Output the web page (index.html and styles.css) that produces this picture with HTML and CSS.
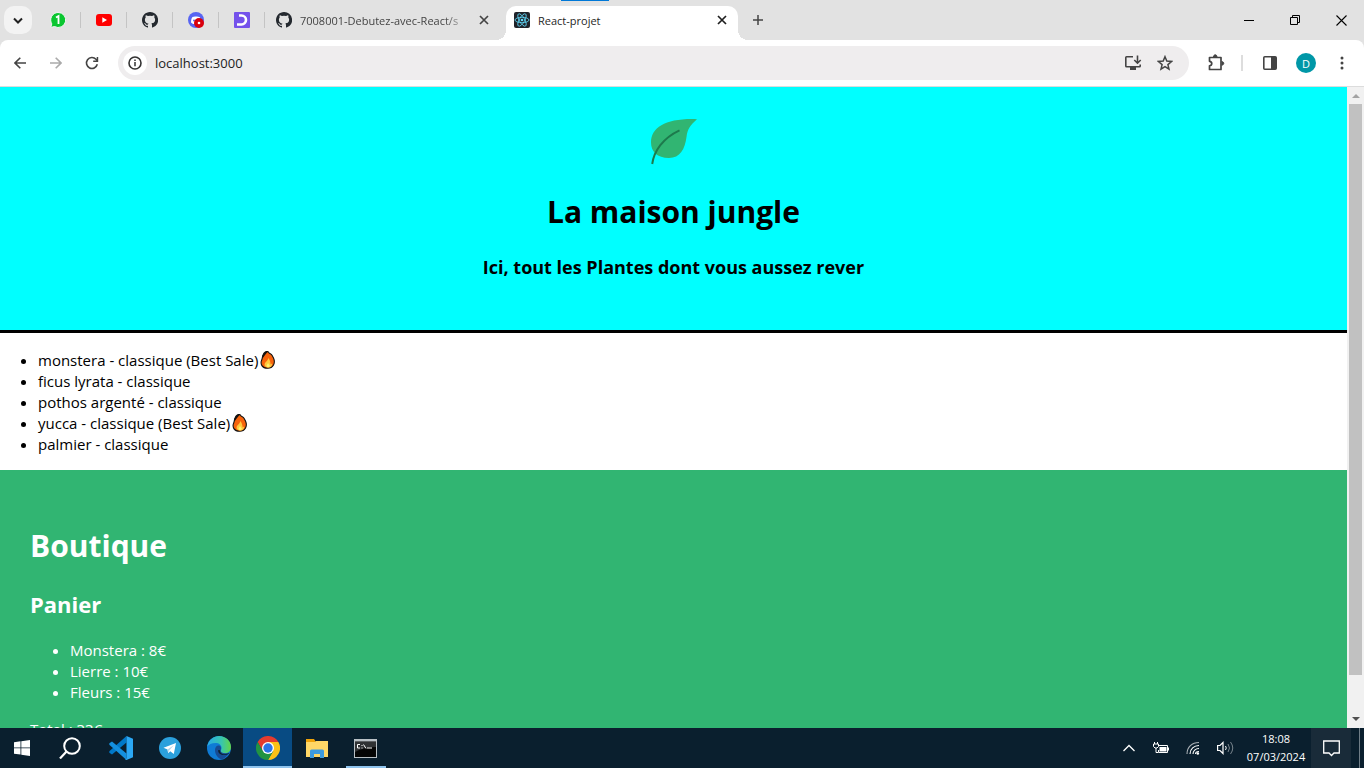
FILE: index.html
```html
<!DOCTYPE html>
<html lang="fr">
<head>
<meta charset="utf-8">
<title>React-projet</title>
<link rel="stylesheet" href="styles.css">
</head>
<body>
<svg class="defs" aria-hidden="true">
  <symbol id="github" viewBox="0 0 16 16"><path d="M8 0C3.6 0 0 3.6 0 8c0 3.500 2.300 6.500 5.500 7.600.4.1.5-.2.5-.4v-1.400c-2.200.5-2.700-1-2.700-1-.4-.9-.9-1.200-.9-1.200-.7-.5.1-.5.1-.5.8.1 1.200.8 1.200.8.7 1.300 1.900.9 2.300.7.1-.5.300-.9.500-1.100-1.800-.2-3.600-.9-3.600-4 0-.9.300-1.600.8-2.100-.1-.2-.4-1 .1-2.100 0 0 .7-.2 2.200.8a7.500 7.500 0 0 1 4 0c1.500-1 2.200-.8 2.200-.8.4 1.100.2 1.900.1 2.100.5.600.8 1.300.8 2.100 0 3.100-1.900 3.700-3.700 3.900.3.400.6.900.6 1.700v2.100c0 .2.100.5.600.4A8 8 0 0 0 8 0z" fill="#24292f"/></symbol>
  <symbol id="close" viewBox="0 0 10 10"><path d="M1 1l8 8M9 1L1 9" stroke="currentColor" stroke-width="1.700"/></symbol>
  <symbol id="fire" viewBox="0 0 16 18"><path d="M3 4C4 1 7-.5 8.500 1.200 9.500 3 11 2.500 12 4.200L13.500 7c2.200 5-.2 10.300-5.900 10.300S0 13 1.700 9C2.600 7 2.200 6 3 4z" fill="#f7630c" stroke="#111" stroke-width="1.100"/><path d="M2.500 4.500L5 1l3-.5L5 4 2.500 7.500z" fill="#111"/><path d="M8 7c.4 3-2.800 3.500-3.400 6-.4 2 1.200 3.500 3.600 3.500s4.300-1.500 3.700-4l-1.300 1C10.500 11 10 8.500 8 7z" fill="#ffc83d"/><path d="M8 12l-1.600 3L8 16.500l2-1.500z" fill="#fff36b"/></symbol>
</svg>

<header class="browser">
  <div class="tabstrip">
    <span class="capture-bar"></span>
    <button class="tab-search" aria-label="Rechercher des onglets"><svg width="10" height="7" viewBox="0 0 10 7"><path d="M1 1.500l4 4 4-4" fill="none" stroke="#222" stroke-width="2"/></svg></button>
    <button class="pinned" aria-label="WhatsApp"><svg width="16" height="16" viewBox="0 0 16 16"><path d="M8 .5a7.500 7.500 0 1 1-3.500 14L.8 15.400l1-3.500A7.500 7.500 0 0 1 8 .5z" fill="#0ac630" stroke="#f5f5f5"/><path d="M6 5.500L8.500 4v8" fill="none" stroke="#fff" stroke-width="1.800"/></svg></button>
    <button class="pinned" aria-label="YouTube"><svg width="16" height="16" viewBox="0 0 16 16"><rect y="2" width="16" height="12" rx="3" fill="#f00"/><path d="M6.300 5.300v5.400L11 8z" fill="#fff"/></svg></button>
    <button class="pinned" aria-label="GitHub"><svg width="16" height="16"><use href="#github"/></svg></button>
    <button class="pinned" aria-label="Discord"><svg width="16" height="16" viewBox="0 0 16 16"><circle cx="8" cy="8" r="8" fill="#5865f2"/><path d="M3 10.500c0-3 .8-5 1.500-5.500L7 4.500h2l2.500.5c1 1 1.500 3 1.500 5.500L11 12H5z" fill="#fff"/><circle cx="6" cy="8.500" r="1" fill="#5865f2"/><circle cx="11" cy="11" r="5" fill="#d9000d"/><circle cx="11" cy="11" r="1.300" fill="#fff"/></svg></button>
    <button class="pinned" aria-label="Dashboard"><svg width="16" height="16" viewBox="0 0 16 16"><rect width="16" height="16" rx="1" fill="#7451eb"/><path d="M5 3.500h2.500a4.500 4.500 0 0 1 0 9H3" fill="none" stroke="#fff" stroke-width="2.600"/></svg></button>
    <div class="tab">
      <svg width="16" height="16"><use href="#github"/></svg>
      <span class="tab-title faded">7008001-Debutez-avec-React/s</span>
      <button class="tab-close" aria-label="Fermer"><svg width="10" height="10"><use href="#close"/></svg></button>
    </div>
    <div class="tab active">
      <svg width="16" height="16" viewBox="0 0 16 16"><rect width="16" height="16" rx="2" fill="#20232a"/><g fill="none" stroke="#61dafb" stroke-width=".8"><ellipse cx="8" cy="8" rx="7" ry="2.700"/><ellipse cx="8" cy="8" rx="7" ry="2.700" transform="rotate(60 8 8)"/><ellipse cx="8" cy="8" rx="7" ry="2.700" transform="rotate(120 8 8)"/></g><circle cx="8" cy="8" r="1.300" fill="#61dafb"/></svg>
      <span class="tab-title">React-projet</span>
      <button class="tab-close" aria-label="Fermer"><svg width="10" height="10"><use href="#close"/></svg></button>
    </div>
    <button class="new-tab" aria-label="Nouvel onglet"><svg width="10" height="10" viewBox="0 0 10 10"><path d="M5 0v10M0 5h10" stroke="#444" stroke-width="1.500"/></svg></button>
    <div class="window-controls">
      <button aria-label="Réduire"><svg width="10" height="10" viewBox="0 0 10 10"><path d="M0 5.500h10" stroke="#000"/></svg></button>
      <button aria-label="Restaurer"><svg width="10" height="10" viewBox="0 0 10 10"><path d="M.5 2.500h7v7h-7zM2.500 2.500v-2h7v7h-2" fill="none" stroke="#000"/></svg></button>
      <button aria-label="Fermer la fenêtre"><svg width="11" height="11" viewBox="0 0 11 11"><path d="M.5.5l10 10M10.500.5l-10 10" stroke="#000" stroke-width="1.100"/></svg></button>
    </div>
  </div>
  <div class="toolbar">
    <button class="nav" aria-label="Retour"><svg width="12" height="12" viewBox="0 0 12 12"><path d="M12 6H1M6.300.7L1 6l5.300 5.300" fill="none" stroke="#444" stroke-width="1.600"/></svg></button>
    <button class="nav" aria-label="Suivant"><svg width="12" height="12" viewBox="0 0 12 12"><path d="M0 6h11M5.700.7L11 6l-5.300 5.300" fill="none" stroke="#aaa" stroke-width="1.600"/></svg></button>
    <button class="nav" aria-label="Actualiser"><svg width="14" height="14" viewBox="0 0 14 14"><path d="M12.300 8.300A5.500 5.500 0 1 1 11 3.200l1.300 1.400" fill="none" stroke="#444" stroke-width="1.600"/><path d="M13.200 1v5H8.200V4.500h3.500V1z" fill="#444"/></svg></button>
    <div class="omnibox">
      <button class="site-info" aria-label="Informations sur le site"><svg width="14" height="14" viewBox="0 0 14 14"><circle cx="7" cy="7" r="6" fill="none" stroke="#333" stroke-width="1.600"/><path d="M7 6v4.300M7 3.400v1.500" stroke="#333" stroke-width="1.500"/></svg></button>
      <input class="address" type="text" value="localhost:3000" aria-label="Adresse">
      <button class="tool" aria-label="Installer"><svg width="18" height="16" viewBox="0 0 18 16"><path d="M9 1.800H2.500q-.7 0-.7.700v8.500q0 .7.700.7h13q.7 0 .7-.7V9.500" fill="none" stroke="#444" stroke-width="1.600"/><path d="M6 12h6v3H6z" fill="#444"/><path d="M13.500.5V8M10.300 5l3.200 3.200L16.700 5" fill="none" stroke="#444" stroke-width="1.600"/></svg></button>
      <button class="tool" aria-label="Ajouter aux favoris"><svg width="16" height="16" viewBox="0 0 16 16"><path d="M8 1.700l1.800 4.400 4.700.4-3.600 3.100 1.100 4.600L8 11.700l-4 2.500 1.100-4.600-3.600-3.100 4.700-.4z" fill="none" stroke="#444" stroke-width="1.500"/></svg></button>
    </div>
    <button class="extensions" aria-label="Extensions"><svg width="18" height="18" viewBox="0 0 18 18"><path d="M2.500 3.500H14v12H2.500v-3.700c3-.2 3-4.300 0-4.500z" fill="none" stroke="#444" stroke-width="1.700" stroke-linejoin="round"/><path d="M6.500 3c0-3 3.500-3 3.500 0M14.500 7.500c3 0 3 3.700 0 3.700" fill="#444" stroke="#444"/></svg></button>
    <span class="toolbar-rule"></span>
    <button class="side-panel" aria-label="Panneau latéral"><svg width="14" height="14" viewBox="0 0 14 14"><rect x=".8" y=".8" width="12.400" height="12.400" rx="1" fill="none" stroke="#444" stroke-width="1.600"/><path d="M8 1h5v12H8z" fill="#444"/></svg></button>
    <button class="profile" aria-label="Profil">D</button>
    <button class="more" aria-label="Menu"><svg width="4" height="14" viewBox="0 0 4 14"><g fill="#444"><circle cx="2" cy="2" r="1.500"/><circle cx="2" cy="7" r="1.500"/><circle cx="2" cy="12" r="1.500"/></g></svg></button>
  </div>
</header>

<div class="viewport">
  <main class="page">
    <section class="banner">
      <svg class="logo" width="46" height="46" viewBox="0 0 46 46" role="img" aria-label="La maison jungle"><path d="M46 .2C39 6.500 36.500 10 35.500 18 34 30 29 39 18 39 6 39 0 32.500 0 23.500 0 8 16-1 46 .2z" fill="#31b572"/><path d="M1.200 45C3 32 12 19 28.500 11.300" fill="none" stroke="#1d7a4c" stroke-width="2"/></svg>
      <h1>La maison jungle</h1>
      <h3>Ici, tout les Plantes dont vous aussez rever</h3>
    </section>
    <ul class="plants">
      <li>monstera - classique (Best Sale)<svg class="fire" width="16" height="18" role="img" aria-label="🔥"><use href="#fire"/></svg></li>
      <li>ficus lyrata - classique</li>
      <li>pothos argenté - classique</li>
      <li>yucca - classique (Best Sale)<svg class="fire" width="16" height="18" role="img" aria-label="🔥"><use href="#fire"/></svg></li>
      <li>palmier - classique</li>
    </ul>
    <section class="cart">
      <h1>Boutique</h1>
      <h2>Panier</h2>
      <ul>
        <li>Monstera : 8€</li>
        <li>Lierre : 10€</li>
        <li>Fleurs : 15€</li>
      </ul>
      <p>Total : 33€</p>
    </section>
  </main>
  <div class="scrollbar" aria-hidden="true">
    <svg width="17" height="17" viewBox="0 0 17 17"><path d="M5 11h8L9 7z" fill="#a3a3a3"/></svg>
    <div class="track"><div class="thumb"></div></div>
    <svg width="17" height="17" viewBox="0 0 17 17"><path d="M5 6h8l-4 4z" fill="#505050"/></svg>
  </div>
</div>

<footer class="taskbar">
  <button class="start" aria-label="Démarrer"><svg width="16" height="16" viewBox="0 0 16 16"><path d="M0 2.200l6.500-.9v6.200H0zM7.300 1.200L16 0v7.500H7.300zM0 8.300h6.500v6.300L0 13.700zM7.300 8.300H16V16l-8.700-1.200z" fill="#fff"/></svg></button>
  <button class="search" aria-label="Rechercher"><svg width="22" height="22" viewBox="0 0 22 22"><circle cx="13" cy="9" r="7.800" fill="none" stroke="#fff" stroke-width="2"/><path d="M7.500 14.500L1 21.500" stroke="#fff" stroke-width="2.200"/></svg></button>
  <button class="app" aria-label="Visual Studio Code"><svg width="24" height="24" viewBox="0 0 24 24"><path d="M17.500 6.500L3 18.500.3 16.800v-1.500L17.500 0z" fill="#0078c8"/><path d="M.3 7.200L3 5.500l14.500 12V24L.3 8.700z" fill="#1490df"/><path d="M17.500 0L24 2.800v18.400L17.500 24l-1.500-.8 1.500-.7z" fill="#2ba8f5"/></svg></button>
  <button class="app" aria-label="Telegram"><svg width="22" height="22" viewBox="0 0 22 22"><circle cx="11" cy="11" r="11" fill="#2ba0dc"/><path d="M4.500 10.800L17 6l-2.200 11-3.600-2.700-2 1.900-.7-3.700z" fill="#fff"/><path d="M8.500 12.500L15 8l-5.200 6-.6 2.200z" fill="#b9d9ec"/></svg></button>
  <button class="app" aria-label="Edge"><svg width="24" height="24" viewBox="0 0 24 24"><defs><linearGradient id="edge-a" x1="0" x2="1"><stop offset="0" stop-color="#28a9e8"/><stop offset=".6" stop-color="#38c5ae"/><stop offset="1" stop-color="#62d548"/></linearGradient></defs><circle cx="12" cy="12" r="12" fill="#0f7bd5"/><path d="M.2 10.500C1.500 3.500 7 0 12 0c7 0 12 5 12 11 0 4-3 6.500-6.500 6.500-3 0-4.500-1.200-4-2.500 2.500-3 .5-7.500-4-8C5 6.800 1.500 8.500.2 10.500z" fill="url(#edge-a)"/><path d="M8 14c0-3 2-5 4-4.500 2.500.7 2.300 3.500 1.500 5 0 2 3.500 3.500 8.500 2.300-2 3.700-4.500 5.700-7 6.700-4-1-7-5-7-9.500z" fill="#174c94"/><path d="M13.200 14.200c-.5 2 1.200 4 4.300 4 2.300 0 4-.7 5-1.700l-.8 1.500c-5 2.500-11 .5-10.500-4z" fill="#0b2131"/></svg></button>
  <button class="app current" aria-label="Chrome"><svg width="24" height="24" viewBox="0 0 24 24"><path d="M1.600 6A12 12 0 0 1 22.400 6H12L6.800 15z" fill="#e33b2e"/><path d="M22.400 6A12 12 0 0 1 12 24l5.200-9L12 6z" fill="#fbc116"/><path d="M12 24A12 12 0 0 1 1.600 6l5.200 9h10.400z" fill="#229342"/><circle cx="12" cy="12" r="6" fill="#fff"/><circle cx="12" cy="12" r="4.700" fill="#2a74e8"/></svg></button>
  <button class="app" aria-label="Explorateur de fichiers"><svg width="22" height="19" viewBox="0 0 22 19"><path d="M0 0h8l2 3h12v15H0z" fill="#f0a30a"/><path d="M0 3h9l1-1h12v16H0z" fill="#ffd767"/><path d="M4 19v-7q0-1.500 1.500-1.500h11q1.500 0 1.500 1.500v7h-4v-4H8v4z" fill="#3d9ade"/></svg></button>
  <button class="app open" aria-label="Invite de commandes"><svg width="23" height="19" viewBox="0 0 23 19"><path d="M0 0h23v19H0z" fill="#b9c0c5"/><path d="M1 2.500h21V18H1z" fill="#050505"/><path d="M1 3h21v5Q10 8 1 13z" fill="#303234"/><path d="M6 5.500H3.500v3.500H6M8 6v1M8 8.500v1M9.500 5.500l2.500 4M13 9h5" fill="none" stroke="#fff"/></svg></button>
  <div class="tray">
    <button class="tray-chevron" aria-label="Icônes cachées"><svg width="12" height="8" viewBox="0 0 12 8"><path d="M.5 7L6 1.500 11.500 7" fill="none" stroke="#fff" stroke-width="1.300"/></svg></button>
    <button aria-label="Batterie"><svg width="17" height="13" viewBox="0 0 17 13"><path d="M6 3.500h8.500v7h-9V8M15.500 5.500v3" fill="none" stroke="#fff"/><path d="M6.500 5h7v4.500h-7z" fill="#fff"/><path d="M1.500 0v2M4.500 0v2M3 6v4.500h2" fill="none" stroke="#fff"/><path d="M.5 2h5v2.500L4 6H2L.5 4.500z" fill="none" stroke="#fff"/></svg></button>
    <button aria-label="Wi-Fi"><svg width="14" height="14" viewBox="0 0 14 14"><g fill="none" stroke="#fff" stroke-width="1.100"><path d="M1 13C1 6 6 1.500 13 1.500" opacity=".65"/><path d="M4 13c0-5 4-8.500 9-8.500M7 13c0-3 2.500-5.500 6-5.500"/><path d="M9.500 13c0-1.500 1.500-2.500 3.500-2.500"/></g><circle cx="11.800" cy="12.500" r="1.300" fill="#fff"/></svg></button>
    <button aria-label="Volume"><svg width="17" height="14" viewBox="0 0 17 14"><path d="M.6 4.500H3l3-3v11l-3-3H.6z" fill="none" stroke="#fff" stroke-width="1.200"/><g fill="none" stroke="#fff"><path d="M8.500 5q1.500 2 0 4"/><path d="M11 3q3 4 0 8M13.500 1q4.500 6 0 12" opacity=".45"/></g></svg></button>
    <button class="clock"><time>18:08</time><span>07/03/2024</span></button>
    <button class="notifications" aria-label="Notifications"><svg width="17" height="17" viewBox="0 0 17 17"><path d="M.7 1h15.600v12H11l-2.500 2.500L6 13H.7z" fill="none" stroke="#fff" stroke-width="1.300"/></svg></button>
    <span class="show-desktop"></span>
  </div>
</footer>
</body>
</html>
```

FILE: styles.css
```css
* { box-sizing: border-box; }

body {
  margin: 0;
  height: 100vh;
  display: flex;
  flex-direction: column;
  overflow: hidden;
  font-family: "Open Sans", "Noto Sans", sans-serif;
  font-size: 15px;
  color: #000;
  background: #fff;
}

svg { display: block; flex: none; }
.defs { position: absolute; width: 0; height: 0; }

button {
  display: flex;
  align-items: center;
  justify-content: center;
  flex: none;
  margin: 0;
  padding: 0;
  border: 0;
  background: none;
  color: inherit;
  font: inherit;
}

/* Browser chrome */
.browser { flex: none; background: #e2e2e2; }

.tabstrip {
  position: relative;
  display: flex;
  height: 40px;
  padding-left: 4px;
}

.capture-bar {
  position: absolute;
  top: 0;
  left: 561px;
  width: 48px;
  height: 1px;
  background: #0078d7;
}

.tab-search {
  width: 28px;
  height: 28px;
  margin: 6px 3px 0 0;
  border-radius: 10px;
  background: #f3f3f3;
}

.pinned {
  width: 46px;
  height: 40px;
  background: linear-gradient(#c4c4c4, #c4c4c4) right center / 1px 16px no-repeat;
}

.tab {
  display: flex;
  align-items: center;
  gap: 8px;
  width: 241px;
  padding: 0 16px 0 11px;
  font-size: 11px;
  color: #444;
}

.tab-title { flex: 1; overflow: hidden; white-space: nowrap; }
.faded { mask-image: linear-gradient(90deg, #000 85%, transparent); }
.tab-close { width: 12px; height: 16px; color: #444; }

.tab.active {
  position: relative;
  width: 232px;
  height: 34px;
  margin-top: 6px;
  padding: 0 10px 6px 8px;
  border-radius: 10px 10px 0 0;
  background: #fff;
  color: #1f1f1f;
}

.tab.active .tab-close { color: #1f1f1f; }

.tab.active::before,
.tab.active::after {
  content: "";
  position: absolute;
  bottom: 0;
  width: 10px;
  height: 10px;
}
.tab.active::before { right: 100%; background: radial-gradient(circle at 0 0, transparent 10px, #fff 10px); }
.tab.active::after { left: 100%; background: radial-gradient(circle at 100% 0, transparent 10px, #fff 10px); }

.new-tab { width: 40px; }
.window-controls { display: flex; margin-left: auto; }
.window-controls button { width: 46px; }

.toolbar {
  display: flex;
  align-items: center;
  height: 47px;
  padding: 0 16px 0 2px;
  border-bottom: 1px solid #dcdcdc;
  border-radius: 8px 8px 0 0;
  background: #fff;
}

.nav { width: 36px; height: 34px; }

.omnibox {
  display: flex;
  flex: 1;
  align-items: center;
  height: 34px;
  margin-left: 8px;
  padding: 0 8px 0 5px;
  border-radius: 17px;
  background: #efedee;
}

.site-info { width: 24px; height: 24px; border-radius: 50%; background: #fff; }

.address {
  flex: 1;
  min-width: 0;
  height: 24px;
  margin: 0;
  padding: 0 8px;
  border: 0;
  background: none;
  font-family: inherit;
  font-size: 13px;
  color: #222;
}

.tool { width: 32px; height: 32px; }
.extensions { width: 32px; margin-left: 11px; }
.toolbar-rule { width: 2px; height: 16px; margin: 0 20px 0 9px; background: #ddd; }
.side-panel { width: 14px; }

.profile {
  width: 20px;
  height: 20px;
  margin: 0 20px 0 19px;
  border-radius: 50%;
  background: #0097a7;
  color: #fff;
  font-size: 11px;
}

.more { width: 12px; }

/* Page */
.viewport { display: flex; flex: 1; min-height: 0; }
.page { flex: 1; min-width: 0; overflow: hidden; line-height: 21px; }

h1, h2, h3 { margin: 0; font-weight: 700; }
h1 { font-size: 30px; line-height: 42px; }
h2 { font-size: 22px; line-height: 32px; }
h3 { font-size: 18px; line-height: 24px; }

.banner {
  display: flex;
  flex-direction: column;
  align-items: center;
  padding: 32px 0 51px;
  border-bottom: 3px solid #000;
  background: #0ff;
}
.banner h1 { margin: 26px 0 22px; }

.plants { margin: 17px 0 15px; padding-left: 38px; }
.fire { display: inline-block; margin-left: 2px; vertical-align: -3px; }

.cart { padding: 55px 30px 30px; background: #31b572; color: #fff; }
.cart h2 { margin-top: 21px; }
.cart ul { margin: 20px 0 16px; padding-left: 40px; }
.cart p { margin: 0; }

.scrollbar { display: flex; flex-direction: column; width: 17px; background: #f1f1f1; }
.track { flex: 1; padding: 0 2px; }
.thumb { height: 94%; background: #c1c1c1; }

/* Taskbar */
.taskbar { display: flex; flex: none; height: 40px; background: #0a1f2e; color: #fff; }
.start { width: 43px; }
.search { width: 53px; }
.app { width: 49px; }
.current { background: #084b83; box-shadow: inset 0 -2px #8fc4ee; }
.open { background: linear-gradient(#8fc4ee, #8fc4ee) center bottom / 40px 2px no-repeat; }

.tray { display: flex; margin-left: auto; }
.tray button { width: 32px; }
.tray .clock {
  flex-direction: column;
  width: 70px;
  font-size: 11px;
  line-height: 18px;
}
.tray .notifications { width: 40px; background: #192b39; }
.show-desktop { width: 5px; margin-left: 8px; border-left: 1px solid #6f7d87; }
```
